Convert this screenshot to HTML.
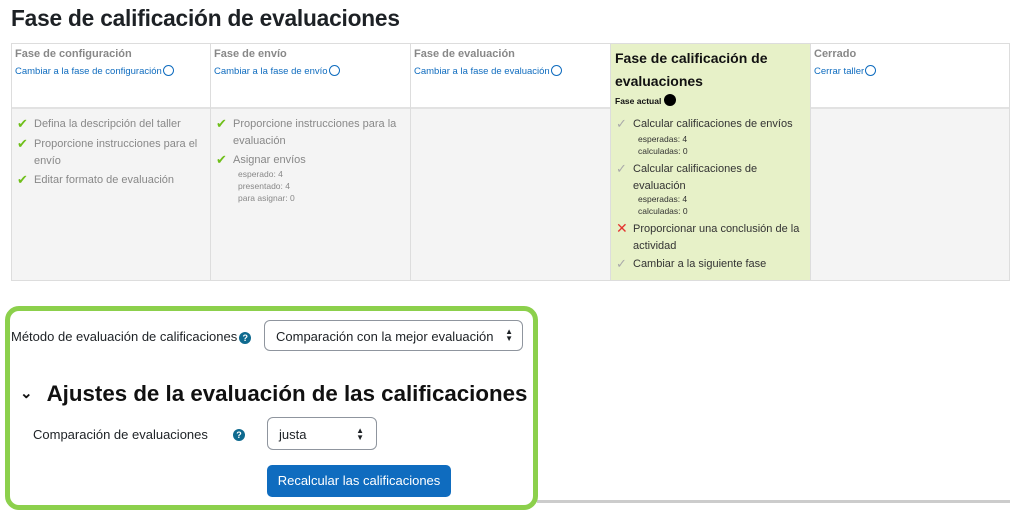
<!DOCTYPE html>
<html><head><meta charset="utf-8"><style>
*{margin:0;padding:0;box-sizing:border-box}
body{width:1014px;height:513px;overflow:hidden;background:#fff;font-family:"Liberation Sans",sans-serif;color:#1d2125;position:relative}
.a{position:absolute}
h1{position:absolute;left:11px;top:5px;font-size:22.7px;font-weight:bold;letter-spacing:-0.2px}
.tbl{position:absolute;left:11px;top:43px;width:999px;height:238px;border:1px solid #ddd;background:#f4f4f4;overflow:hidden}
.hd{position:absolute;top:0;left:0;right:0;height:65px;background:#fff;border-bottom:2px solid #e2e2e2}
.col{position:absolute;top:0;height:237px;border-right:1px solid #ddd}
.t{font-size:11px;color:#888;font-weight:bold;position:absolute;left:3px;top:4px}
.lk{font-size:9.5px;color:#0f6cbf;position:absolute;left:3px;top:21px;white-space:nowrap}
.circ{display:inline-block;width:11px;height:11px;border:1.5px solid #0f6cbf;border-radius:50%;vertical-align:-2px;margin-left:1px}
.it{position:absolute;left:22px;font-size:11px;color:#888;line-height:17px}
.ck{position:absolute;left:5px;font-size:13px;color:#6fbf1a}
.sm{position:absolute;left:27px;font-size:8.5px;color:#888;line-height:12px}
.cur .it{color:#333}.cur .sm{color:#333}
.g{color:#aaa}
</style></head><body>
<h1>Fase de calificación de evaluaciones</h1>
<div class="tbl">
 <div class="hd"></div>
 <div class="col" style="left:0;width:199px">
  <div class="t">Fase de configuración</div>
  <div class="lk">Cambiar a la fase de configuración<span class="circ"></span></div>
  <span class="ck" style="top:72px">✔</span><div class="it" style="top:72px">Defina la descripción del taller</div>
  <span class="ck" style="top:92px">✔</span><div class="it" style="top:92px;width:170px">Proporcione instrucciones para el envío</div>
  <span class="ck" style="top:128px">✔</span><div class="it" style="top:128px">Editar formato de evaluación</div>
 </div>
 <div class="col" style="left:199px;width:200px">
  <div class="t">Fase de envío</div>
  <div class="lk">Cambiar a la fase de envío<span class="circ"></span></div>
  <span class="ck" style="top:72px">✔</span><div class="it" style="top:72px;width:175px">Proporcione instrucciones para la evaluación</div>
  <span class="ck" style="top:108px">✔</span><div class="it" style="top:108px">Asignar envíos</div>
  <div class="sm" style="top:124px">esperado: 4<br>presentado: 4<br>para asignar: 0</div>
 </div>
 <div class="col" style="left:399px;width:200px">
  <div class="t">Fase de evaluación</div>
  <div class="lk">Cambiar a la fase de evaluación<span class="circ"></span></div>
 </div>
 <div class="col cur" style="left:599px;width:200px;background:#e7f1c8">
  <div class="a" style="left:4px;top:3px;font-size:14px;font-weight:bold;line-height:23px;color:#111">Fase de calificación de<br>evaluaciones</div>
  <div class="a" style="left:4px;top:50px;font-size:8.5px;font-weight:bold;color:#111">Fase actual <span style="display:inline-block;width:12px;height:12px;background:#000;border-radius:50%;vertical-align:-2px"></span></div>
  <span class="ck g" style="top:72px">✓</span><div class="it" style="top:72px">Calcular calificaciones de envíos</div>
  <div class="sm" style="top:89px">esperadas: 4<br>calculadas: 0</div>
  <span class="ck g" style="top:117px">✓</span><div class="it" style="top:117px;width:170px">Calcular calificaciones de evaluación</div>
  <div class="sm" style="top:149px">esperadas: 4<br>calculadas: 0</div>
  <span class="ck" style="top:176px;color:#e3342f;font-size:14px">✕</span><div class="it" style="top:177px;width:175px">Proporcionar una conclusión de la actividad</div>
  <span class="ck g" style="top:212px">✓</span><div class="it" style="top:212px">Cambiar a la siguiente fase</div>
 </div>
 <div class="col" style="left:799px;width:200px;border-right:none">
  <div class="t">Cerrado</div>
  <div class="lk">Cerrar taller<span class="circ"></span></div>
 </div>
</div>
<div class="a" style="left:537px;top:500px;width:473px;height:3px;background:#ccc"></div>
<div class="a" style="left:5px;top:306px;width:533px;height:204px;border:5px solid #8cd04c;border-radius:14px;background:#fff"></div>
<div class="a" style="left:11px;top:329px;font-size:13px">Método de evaluación de calificaciones<span style="display:inline-block;width:12px;height:12px;border-radius:50%;background:#0f6a8f;color:#fff;font-size:9px;font-weight:bold;text-align:center;line-height:12px;vertical-align:0px;margin-left:2px">?</span></div>
<div class="a" style="left:264px;top:320px;width:259px;height:31px;border:1px solid #8f959e;border-radius:6px;font-size:13px;padding:8px 11px">Comparación con la mejor evaluación<span style="position:absolute;right:9px;top:7px;font-size:8px;line-height:7px">▲<br>▼</span></div>
<div class="a" style="left:20px;top:381px;font-size:22.3px;font-weight:bold;color:#111;white-space:nowrap"><span style="font-size:15px;position:relative;top:-3px;margin-right:14px">&#x2304;</span>Ajustes de la evaluación de las calificaciones</div>
<div class="a" style="left:33px;top:427px;font-size:13px">Comparación de evaluaciones</div>
<div class="a" style="left:233px;top:429px;width:12px;height:12px;border-radius:50%;background:#0f6a8f;color:#fff;font-size:9px;font-weight:bold;text-align:center;line-height:12px">?</div>
<div class="a" style="left:267px;top:417px;width:110px;height:33px;border:1px solid #8f959e;border-radius:6px;font-size:13px;padding:9px 11px">justa<span style="position:absolute;right:12px;top:9px;font-size:8px;line-height:7px">▲<br>▼</span></div>
<div class="a" style="left:267px;top:465px;width:184px;height:32px;background:#0f6cbf;border-radius:5px;color:#fff;font-size:13px;text-align:center;line-height:32px">Recalcular las calificaciones</div>
</body></html>
